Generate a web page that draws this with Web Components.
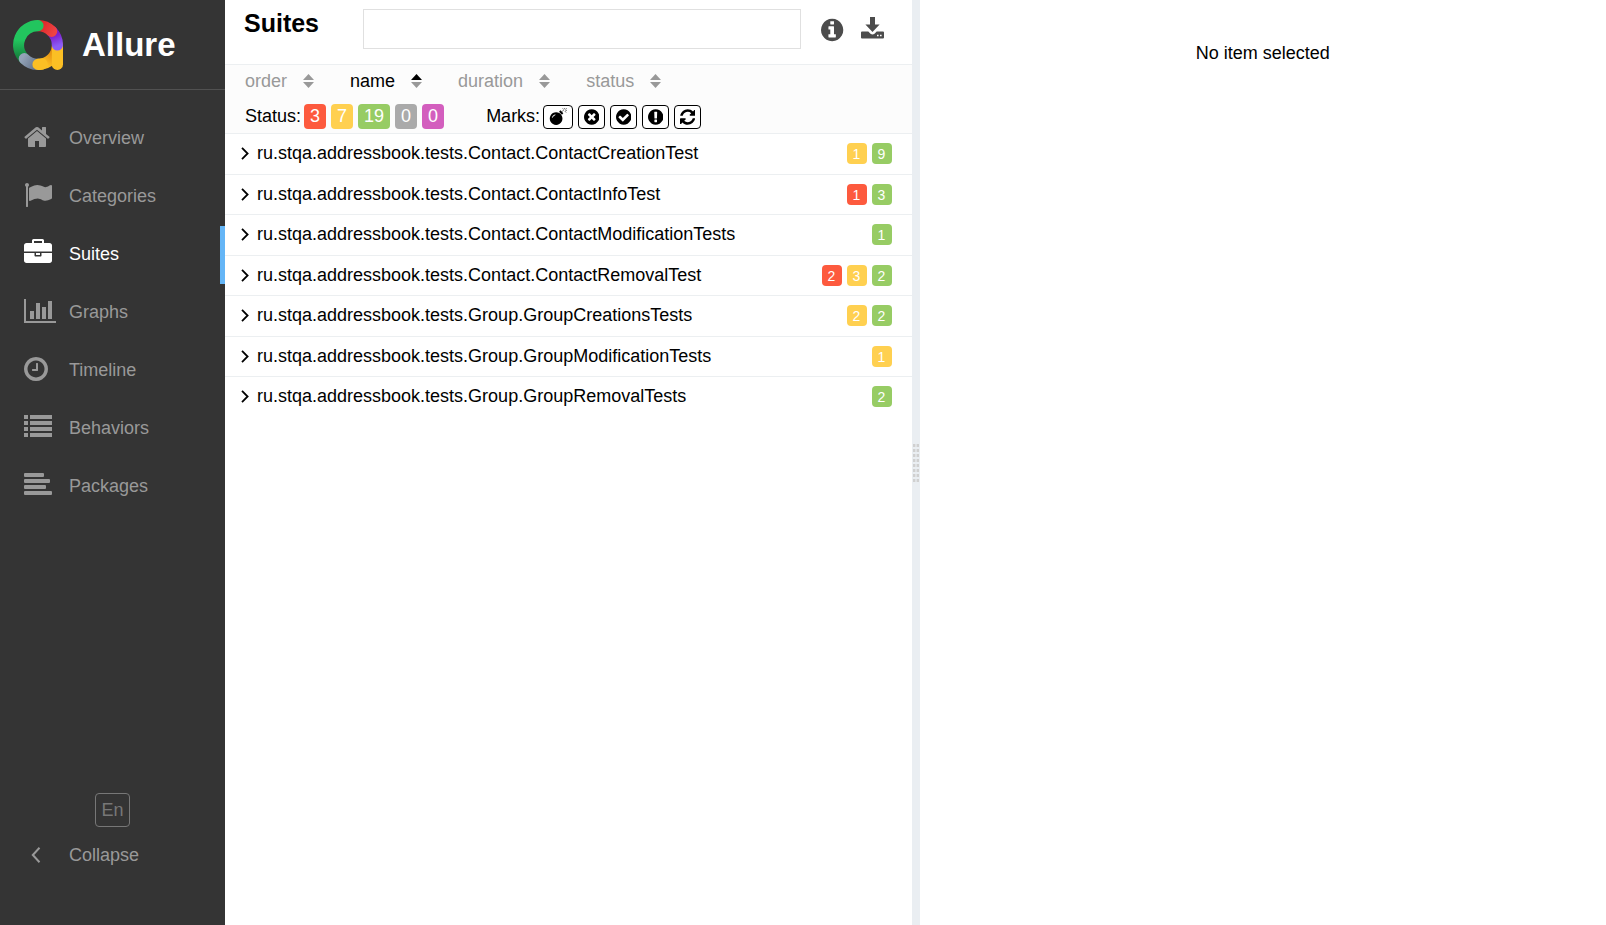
<!DOCTYPE html>
<html lang="en">
<head>
<meta charset="utf-8">
<title>Allure Report</title>
<style>
  html, body { height: 100%; margin: 0; }
  body { font-family: "Liberation Sans", Arial, sans-serif; font-size: 18px; color: #000; background: #fff; }
</style>
</head>
<body>
<allure-app>
  <side-nav slot="nav">
    <nav-item icon="home" href="#overview">Overview</nav-item>
    <nav-item icon="flag" href="#categories">Categories</nav-item>
    <nav-item icon="briefcase" href="#suites" active>Suites</nav-item>
    <nav-item icon="chart" href="#graphs">Graphs</nav-item>
    <nav-item icon="clock" href="#timeline">Timeline</nav-item>
    <nav-item icon="list" href="#behaviors">Behaviors</nav-item>
    <nav-item icon="align" href="#packages">Packages</nav-item>
  </side-nav>
  <suites-pane slot="main">
    <sort-button slot="sort">order</sort-button>
    <sort-button slot="sort" direction="asc">name</sort-button>
    <sort-button slot="sort">duration</sort-button>
    <sort-button slot="sort">status</sort-button>
    <status-toggle slot="status" kind="failed">3</status-toggle>
    <status-toggle slot="status" kind="broken">7</status-toggle>
    <status-toggle slot="status" kind="passed">19</status-toggle>
    <status-toggle slot="status" kind="skipped">0</status-toggle>
    <status-toggle slot="status" kind="unknown">0</status-toggle>
    <mark-toggle slot="marks" icon="bomb" label="Flaky"></mark-toggle>
    <mark-toggle slot="marks" icon="times" label="New failed"></mark-toggle>
    <mark-toggle slot="marks" icon="check" label="New passed"></mark-toggle>
    <mark-toggle slot="marks" icon="exclamation" label="New broken"></mark-toggle>
    <mark-toggle slot="marks" icon="refresh" label="Retries"></mark-toggle>
    <suite-row broken="1" passed="9">ru.stqa.addressbook.tests.Contact.ContactCreationTest</suite-row>
    <suite-row failed="1" passed="3">ru.stqa.addressbook.tests.Contact.ContactInfoTest</suite-row>
    <suite-row passed="1">ru.stqa.addressbook.tests.Contact.ContactModificationTests</suite-row>
    <suite-row failed="2" broken="3" passed="2">ru.stqa.addressbook.tests.Contact.ContactRemovalTest</suite-row>
    <suite-row broken="2" passed="2">ru.stqa.addressbook.tests.Group.GroupCreationsTests</suite-row>
    <suite-row broken="1">ru.stqa.addressbook.tests.Group.GroupModificationTests</suite-row>
    <suite-row passed="2">ru.stqa.addressbook.tests.Group.GroupRemovalTests</suite-row>
  </suites-pane>
  <pane-gutter slot="gutter"></pane-gutter>
  <detail-pane slot="detail">No item selected</detail-pane>
</allure-app>

<script>
const DISC = 'M1664 896q0 209-103 385.5t-279.5 279.5-385.5 103-385.5-103-279.5-279.5-103-385.5 103-385.5 279.5-279.5 385.5-103 385.5 103 279.5 279.5 103 385.5z';

/* name: [viewBox, markup] */
const ICONS = {
  home: ['64 0 1664 1792', '<path d="M1472 992v480q0 26-19 45t-45 19h-384v-384h-256v384h-384q-26 0-45-19t-19-45v-480q0-1 .5-3t.5-3l575-474 575 474q1 2 1 6zm223-69l-62 74q-8 9-21 11h-3q-13 0-21-7l-692-577-692 577q-12 8-24 7-13-2-21-11l-62-74q-8-10-7-23.5t11-21.5l719-599q32-26 76-26t76 26l244 204v-195q0-14 9-23t23-9h192q14 0 23 9t9 23v408l219 182q10 8 11 21.5t-7 23.5z"/>'],
  flag: ['0 0 1792 1792', '<path d="M320 256q0 72-64 110v1266q0 13-9.5 22.5t-22.5 9.5h-64q-13 0-22.5-9.5t-9.5-22.5v-1266q-64-38-64-110 0-53 37.5-90.5t90.5-37.5 90.5 37.5 37.5 90.5zm1472 64v763q0 25-12.5 38.5t-39.5 27.5q-215 116-369 116-61 0-123.500-22t-108.500-48-115.500-48-142.500-22q-192 0-464 146-17 9-33 9-26 0-45-19t-19-45v-742q0-32 31-55 21-14 79-43 236-120 421-120 107 0 200 29t219 88q38 19 88 19 54 0 117.500-21t110-47 88-47 54.500-21q26 0 45 19t19 45z"/>'],
  briefcase: ['0 0 1792 1792', '<path d="M640 256h512v-128h-512v128zm1152 640v480q0 66-47 113t-113 47h-1472q-66 0-113-47t-47-113v-480h672v160q0 26 19 45t45 19h320q26 0 45-19t19-45v-160h672zm-768 0v128h-256v-128h256zm768-480v384h-1792v-384q0-66 47-113t113-47h352v-160q0-40 28-68t68-28h576q40 0 68 28t28 68v160h352q66 0 113 47t47 113z"/>'],
  chart: ['0 0 2048 1792', '<path d="M640 896v512h-256v-512h256zm384-512v1024h-256v-1024h256zm1024 1152v128h-2048v-1536h128v1408h1920zm-640-896v768h-256v-768h256zm384-384v1152h-256v-1152h256z"/>'],
  clock: ['128 0 1536 1792', '<path d="M1024 544v448q0 14-9 23t-23 9h-320q-14 0-23-9t-9-23v-64q0-14 9-23t23-9h224v-352q0-14 9-23t23-9h64q14 0 23 9t9 23zm416 352q0-148-73-273t-198-198-273-73-273 73-198 198-73 273 73 273 198 198 273 73 273-73 198-198 73-273zm224 0q0 209-103 385.5t-279.5 279.5-385.5 103-385.5-103-279.5-279.5-103-385.5 103-385.5 279.5-279.5 385.5-103 385.5 103 279.5 279.5 103 385.5z"/>'],
  list: ['0 0 1792 1792', '<path d="M0 128h256v256h-256zM384 128h1408v256h-1408zM0 512h256v256h-256zM384 512h1408v256h-1408zM0 896h256v256h-256zM384 896h1408v256h-1408zM0 1280h256v256h-256zM384 1280h1408v256h-1408z"/>'],
  align: ['0 0 1792 1792', '<rect y="128" width="1280" height="256" rx="60"/><rect y="512" width="1664" height="256" rx="60"/><rect y="896" width="1408" height="256" rx="60"/><rect y="1280" width="1792" height="256" rx="60"/>'],
  times: ['128 0 1536 1792', `<path fill-rule="evenodd" d="${DISC}M1277 1122q0-26-19-45l-181-181 181-181q19-19 19-45 0-27-19-46l-90-90q-19-19-46-19-26 0-45 19l-181 181-181-181q-19-19-45-19-27 0-46 19l-90 90q-19 19-19 46 0 26 19 45l181 181-181 181q-19 19-19 45 0 27 19 46l90 90q19 19 46 19 26 0 45-19l181-181 181 181q19 19 45 19 27 0 46-19l90-90q19-19 19-46z"/>`],
  check: ['128 0 1536 1792', `<path fill-rule="evenodd" d="${DISC}M1412 734q0-28-18-46l-91-90q-19-19-45-19t-45 19l-408 407-226-226q-19-19-45-19t-45 19l-91 90q-18 18-18 46 0 27 18 45l362 362q19 19 45 19 27 0 46-19l543-543q18-18 18-45z"/>`],
  exclamation: ['128 0 1536 1792', `<path fill-rule="evenodd" d="${DISC}M1024 1375v-190q0-14-9.5-23.5t-22.5-9.5h-192q-13 0-23 10t-10 23v190q0 13 10 23t23 10h192q13 0 22.5-9.5t9.5-23.5zm-2-344l18-621q0-12-10-18-10-8-24-8h-220q-14 0-24 8-10 6-10 18l17 621q0 10 10 17.5t24 7.5h185q14 0 23.5-7.5t10.5-17.5z"/>`],
  info: ['128 0 1536 1792', `<path fill-rule="evenodd" d="${DISC}M1152 1376v-160q0-14-9-23t-23-9h-96v-512q0-14-9-23t-23-9h-320q-14 0-23 9t-9 23v160q0 14 9 23t23 9h96v320h-96q-14 0-23 9t-9 23v160q0 14 9 23t23 9h448q14 0 23-9t9-23zm-128-896v-160q0-14-9-23t-23-9h-192q-14 0-23 9t-9 23v160q0 14 9 23t23 9h192q14 0 23-9t9-23z"/>`],
  refresh: ['128 0 1536 1792', '<path d="M1639 1056q0 5-1 7-64 268-268 434.5t-478 166.5q-146 0-282.5-55t-243.5-157l-129 129q-19 19-45 19t-45-19-19-45v-448q0-26 19-45t45-19h448q26 0 45 19t19 45-19 45l-137 137q71 66 161 102t187 36q134 0 250-65t186-179q11-17 53-117 8-23 30-23h192q13 0 22.5 9.5t9.5 22.5zm25-800v448q0 26-19 45t-45 19h-448q-26 0-45-19t-19-45 19-45l138-138q-148-137-349-137-134 0-250 65t-186 179q-11 17-53 117-8 23-30 23h-199q-13 0-22.5-9.5t-9.5-22.5v-7q65-268 270-434.5t480-166.5q146 0 284 55.5t245 156.5l130-129q19-19 45-19t45 19 19 45z"/>'],
  bomb: ['0 0 19 19', '<path fill-rule="evenodd" d="M7.500 4.500a6.700 6.700 0 1 0 .01 0zM2.900 10q1-2.500 3.700-3.300l.2.700q-2.200.9-3.200 3z"/><path d="M10.600 4l1.500-1.500 3 3-1.500 1.600z"/><path d="M13.600 4l2.200-2.200M14.200.3l1.200 1M16.500 0v1M18.700.3l-1.300 1.200M17.400 2.500h1.500M16.800 3.300l1.300 1.500" fill="none" stroke="currentColor" stroke-width=".9" opacity=".7"/>'],
  download: ['0 0 23 22', '<path fill-rule="evenodd" d="M9 0h5v7.500h4.600L11.500 15 4.400 7.500H9zM0 15.600q0-1 1-1h6.300l2.200 2.200q2 1.600 4 0l2.200-2.200H22q1 0 1 1v5q0 1-1 1H1q-1 0-1-1zM16 17.700v1.600h1.600v-1.600zm3 0v1.600h1.600v-1.600z"/>'],
  left: ['0 0 10 16', '<path d="M8.500 .8L1.800 8l6.700 7.200" fill="none" stroke="currentColor" stroke-width="2"/>'],
  right: ['0 0 8 13', '<path d="M1 .9l5.600 5.600L1 12.100" fill="none" stroke="currentColor" stroke-width="1.800"/>']
};

const define = (name, html, setup) => {
  const template = document.createElement('template');
  template.innerHTML = html;
  customElements.define(name, class extends HTMLElement {
    constructor() {
      super();
      this.attachShadow({ mode: 'open' }).append(template.content.cloneNode(true));
    }
    connectedCallback() { if (setup) setup(this, this.shadowRoot); }
  });
};

const makeIcon = name => {
  const icon = document.createElement('app-icon');
  icon.setAttribute('name', name);
  return icon;
};

define('app-icon', `
  <style>
    :host { display: inline-flex; flex: none; height: 28px; }
    svg { display: block; height: 100%; width: auto; fill: currentColor; }
  </style>
  <svg aria-hidden="true"></svg>`,
  (el, root) => {
    const [box, markup] = ICONS[el.getAttribute('name')];
    const svg = root.querySelector('svg');
    svg.setAttribute('viewBox', box);
    svg.innerHTML = markup;
  });

define('allure-logo', `
  <style>
    :host { display: block; width: 50px; height: 50px; }
    svg { display: block; width: 100%; height: 100%; }
  </style>
  <svg viewBox="0 0 50 50" fill="none" stroke-width="11.200" stroke-linecap="round" aria-hidden="true">
    <defs>
      <linearGradient id="amber" gradientUnits="userSpaceOnUse" x1="44" y1="28" x2="32" y2="44"><stop stop-color="#d97706"/><stop offset="1" stop-color="#fbbf24"/></linearGradient>
      <linearGradient id="violet" gradientUnits="userSpaceOnUse" x1="38" y1="10" x2="44" y2="26"><stop stop-color="#6d18c9"/><stop offset=".4" stop-color="#7e22ce"/><stop offset="1" stop-color="#8b5cf6"/></linearGradient>
      <linearGradient id="red" gradientUnits="userSpaceOnUse" x1="26" y1="5" x2="41" y2="14"><stop stop-color="#dc2626"/><stop offset="1" stop-color="#ef4444"/></linearGradient>
      <linearGradient id="green" gradientUnits="userSpaceOnUse" x1="6" y1="38" x2="6" y2="20"><stop stop-color="#15803d"/><stop offset="1" stop-color="#22c55e"/></linearGradient>
      <linearGradient id="slate" gradientUnits="userSpaceOnUse" x1="10" y1="37" x2="24" y2="46"><stop stop-color="#94a3b8"/><stop offset="1" stop-color="#64748b"/></linearGradient>
    </defs>
    <path stroke="url(#amber)" d="M44.400 25A19.400 19.400 0 0 1 25 44.400"/>
    <path stroke="#fbbf24" d="M44.400 27v17.400"/>
    <path stroke="url(#violet)" d="M38.700 11.300A19.400 19.400 0 0 1 44.400 25"/>
    <path stroke="url(#red)" d="M25 5.600A19.400 19.400 0 0 1 38.700 11.300"/>
    <path stroke="url(#green)" d="M11.300 38.700A19.400 19.400 0 0 1 25 5.600"/>
    <path stroke="url(#slate)" d="M25 44.400A19.400 19.400 0 0 1 11.300 38.700"/>
    <path stroke="#fbbf24" d="M29 44A19.400 19.400 0 0 1 25 44.400"/>
  </svg>`);

define('allure-app', `
  <style>
    :host { display: grid; grid-template-columns: 225px minmax(0, 1fr) 8px minmax(0, 1fr); min-height: 100%; }
    ::slotted(*) { min-width: 0; }
  </style>
  <slot name="nav"></slot><slot name="main"></slot><slot name="gutter"></slot><slot name="detail"></slot>`);

define('side-nav', `
  <style>
    :host { display: flex; flex-direction: column; background: #343434; color: #999; }
    header { display: flex; align-items: center; gap: 19px; height: 89px; padding-left: 13px; border-bottom: 1px solid #515151; }
    .brand { color: #fff; font-size: 33px; font-weight: bold; line-height: 40px; }
    nav { display: flex; flex-direction: column; padding-top: 20px; }
    footer { display: flex; flex-direction: column; align-items: center; margin-top: auto; padding-bottom: 42px; }
    button { font: inherit; color: inherit; background: none; border: 0; padding: 0; cursor: pointer; }
    .lang { width: 35px; height: 34px; border: 1px solid #777; border-radius: 4px; color: #777; }
    .collapse { display: flex; align-items: center; align-self: stretch; height: 56px; padding-left: 31px; gap: 28px; line-height: 24px; }
    .collapse app-icon { height: 16px; }
  </style>
  <header><allure-logo></allure-logo><span class="brand">Allure</span></header>
  <nav aria-label="Report sections"><slot></slot></nav>
  <footer>
    <button class="lang" type="button">En</button>
    <button class="collapse" type="button"><app-icon name="left"></app-icon><span>Collapse</span></button>
  </footer>`);

define('nav-item', `
  <style>
    :host { display: block; }
    a { display: flex; align-items: center; height: 58px; box-sizing: border-box; padding: 0 0 2px 24px; color: inherit; line-height: 24px; text-decoration: none; border-right: 5px solid transparent; }
    .icon { display: flex; width: 45px; padding-bottom: 3px; }
    :host([active]) a { color: #fff; border-right-color: #64b5f6; }
  </style>
  <a><span class="icon"></span><span><slot></slot></span></a>`,
  (el, root) => {
    const link = root.querySelector('a');
    link.href = el.getAttribute('href');
    if (el.hasAttribute('active')) link.setAttribute('aria-current', 'page');
    root.querySelector('.icon').replaceChildren(makeIcon(el.getAttribute('icon')));
  });

define('suites-pane', `
  <style>
    :host { display: flex; flex-direction: column; }
    header { display: flex; align-items: flex-start; height: 64px; box-sizing: border-box; padding: 9px 28px 0 19px; }
    h1 { margin: 0; width: 119px; font-size: 25px; line-height: 28px; }
    input { flex: 1; min-width: 0; height: 40px; box-sizing: border-box; margin: 0 20px 0 0; padding: 0 10px; border: 1px solid #e0e0e0; font: inherit; outline: 0; }
    .action { display: flex; margin-top: 8px; padding: 0; border: 0; background: none; color: #4c4c4c; cursor: pointer; }
    .info { margin-right: 17px; }
    .info app-icon { height: 26px; }
    .download app-icon { height: 22px; }
    .controls { border: solid #eceff1; border-width: 1px 0; background: #fcfcfc; padding: 0 20px; }
    .sorts { display: flex; height: 32px; align-items: center; gap: 36px; }
    .filters { display: flex; align-items: center; gap: 42px; height: 33px; padding-top: 3px; }
    .group { display: flex; align-items: center; gap: 5px; }
    .label { margin-right: -2px; }
  </style>
  <header>
    <h1>Suites</h1>
    <input type="search" aria-label="Search suites">
    <button class="action info" type="button" aria-label="Show all groups"><app-icon name="info"></app-icon></button>
    <button class="action download" type="button" aria-label="Download CSV"><app-icon name="download"></app-icon></button>
  </header>
  <div class="controls">
    <div class="sorts"><slot name="sort"></slot></div>
    <div class="filters">
      <div class="group"><span class="label">Status:</span><slot name="status"></slot></div>
      <div class="group"><span class="label">Marks:</span><slot name="marks"></slot></div>
    </div>
  </div>
  <div><slot></slot></div>`);

define('sort-button', `
  <style>
    :host { display: block; }
    button { display: flex; align-items: center; gap: 16px; padding: 0; border: 0; background: none; font: inherit; line-height: 24px; color: #999; cursor: pointer; }
    svg { display: block; width: 11px; height: 14px; }
    .up, .down { fill: #999; }
    :host([direction]) button { color: #000; }
    :host([direction="asc"]) .up { fill: #000; }
  </style>
  <button type="button"><span><slot></slot></span>
    <svg viewBox="0 0 11 14" aria-hidden="true"><path class="up" d="M5.500 0L11 6H0z"/><path class="down" d="M0 8h11l-5.500 6z"/></svg>
  </button>`);

const STATUS_COLORS = `
    :host([kind="failed"]) { --status: #fd5a3e; }
    :host([kind="broken"]) { --status: #ffd050; }
    :host([kind="passed"]) { --status: #97cc64; }
    :host([kind="skipped"]) { --status: #aaa; }
    :host([kind="unknown"]) { --status: #d35ebe; }`;

define('status-toggle', `
  <style>
    ${STATUS_COLORS}
    :host { display: block; }
    button { display: block; height: 25px; padding: 0 6px; border: 0; border-radius: 4px; background: var(--status); color: #fff; font: inherit; line-height: 25px; cursor: pointer; }
  </style>
  <button type="button"><slot></slot></button>`);

define('status-count', `
  <style>
    ${STATUS_COLORS}
    :host { display: block; min-width: 20px; height: 21px; border-radius: 4px; background: var(--status); color: #fff; font-size: 14px; line-height: 22px; text-align: center; }
  </style>
  <slot></slot>`);

define('mark-toggle', `
  <style>
    :host { display: block; }
    button { display: flex; align-items: center; justify-content: center; width: 27px; height: 24px; padding: 0; border: 1px solid #000; border-radius: 4px; background: #fff; color: #000; cursor: pointer; }
    app-icon { height: 18px; }
    :host([icon="bomb"]) button { width: 30px; }
  </style>
  <button type="button"></button>`,
  (el, root) => {
    const button = root.querySelector('button');
    button.setAttribute('aria-label', el.getAttribute('label'));
    button.replaceChildren(makeIcon(el.getAttribute('icon')));
  });

define('suite-row', `
  <style>
    :host { display: block; height: 40px; box-sizing: border-box; border-bottom: 1px solid #eceff1; }
    :host(:nth-of-type(odd)) { height: 41px; }
    :host(:last-of-type) { border-bottom: 0; }
    button { display: flex; align-items: center; width: 100%; height: 39px; padding: 0 20px 0 16px; border: 0; background: none; font: inherit; color: inherit; text-align: left; cursor: pointer; }
    app-icon { height: 13px; margin-right: 8px; }
    .name { flex: 1; padding-bottom: 1px; }
    .counts { display: flex; gap: 5px; }
  </style>
  <button type="button" aria-expanded="false">
    <app-icon name="right"></app-icon><span class="name"><slot></slot></span><span class="counts"></span>
  </button>`,
  (el, root) => {
    const counts = ['failed', 'broken', 'passed'].filter(kind => el.hasAttribute(kind)).map(kind => {
      const count = document.createElement('status-count');
      count.setAttribute('kind', kind);
      count.textContent = el.getAttribute(kind);
      return count;
    });
    root.querySelector('.counts').replaceChildren(...counts);
  });

define('pane-gutter', `
  <style>
    :host { display: flex; align-items: center; justify-content: center; background: #eaeef2; cursor: col-resize; }
    div { width: 6px; height: 38px; background: linear-gradient(90deg, transparent 2px, #eaeef299 2px 4px, transparent 4px), repeating-linear-gradient(#d0d0d0 0 3px, #eaeef2 3px 5px); }
  </style>
  <div></div>`);

define('detail-pane', `
  <style>
    :host { display: block; padding-top: 41px; line-height: 24px; text-align: center; }
  </style>
  <slot></slot>`);
</script>
</body>
</html>
